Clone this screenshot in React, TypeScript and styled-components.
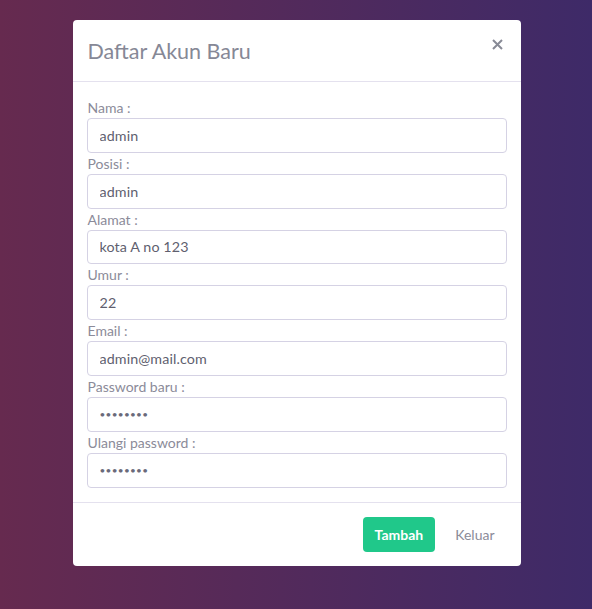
import React from "react";
import styled, { createGlobalStyle } from "styled-components";

const Global = createGlobalStyle`
  html, body { margin: 0; padding: 0; }
  body {
    font-family: Lato, "Open Sans", sans-serif;
    background: linear-gradient(90deg, #662a4f 0%, #3e2a68 100%);
    min-height: 609px;
  }
  * { box-sizing: border-box; }
`;

const Page = styled.div`
  display: flex;
  justify-content: center;
  padding-top: 20px;
  padding-left: 1px;
  height: 609px;
`;

const Modal = styled.div`
  width: 448px;
  height: 546px;
  background: #fff;
  border-radius: 4px;
  display: flex;
  flex-direction: column;
  align-self: flex-start;
`;

const Header = styled.div`
  height: 62px;
  display: flex;
  align-items: center;
  justify-content: space-between;
  padding: 0 16px 0 15px;
  border-bottom: 1px solid #e4e1ee;
`;

const Title = styled.h5`
  margin: 0;
  font-size: 21.5px;
  font-weight: 400;
  color: #868896;
  line-height: 1;
  padding-top: 2px;
`;

const Close = styled.button`
  border: 0;
  background: none;
  padding: 0;
  width: 14px;
  height: 14px;
  display: flex;
  align-items: center;
  justify-content: center;
  cursor: pointer;
  margin-top: -12px;
`;

const Body = styled.div`
  padding: 15px 14px 14px 14px;
  display: flex;
  flex-direction: column;
  border-bottom: 1px solid #e4e1ee;
`;

const Group = styled.div`
  display: flex;
  flex-direction: column;
`;

const Label = styled.label`
  font-size: 14px;
  line-height: 21px;
  color: #8b8b99;
  padding-left: 1px;
`;

const Input = styled.input<{ $secret?: boolean }>`
  height: 34.8px;
  width: 100%;
  border: 1px solid #d5d2e4;
  border-radius: 4px;
  padding: 0 12px;
  font-family: Lato, "Open Sans", sans-serif;
  font-size: ${(p) => (p.$secret ? "10px" : "14.3px")};
  letter-spacing: ${(p) => (p.$secret ? "0.3px" : "0.1px")};
  color: ${(p) => (p.$secret ? "#6a6a7a" : "#5f5f6f")};
  outline: none;
  background: #fff;
`;

const Footer = styled.div`
  flex: 1;
  display: flex;
  justify-content: flex-end;
  align-items: flex-start;
  padding: 14px 14px 0 0;
  gap: 8px;
`;

const Button = styled.button<{ $primary?: boolean }>`
  height: 35px;
  border: 0;
  border-radius: 4px;
  font-family: Lato, "Open Sans", sans-serif;
  font-size: 14px;
  padding: 0 12px;
  background: ${(p) => (p.$primary ? "#20c88a" : "transparent")};
  color: ${(p) => (p.$primary ? "#fff" : "#8b8b99")};
  font-weight: ${(p) => (p.$primary ? 700 : 400)};
  cursor: pointer;
`;

const fields: { label: string; value: string; secret?: boolean }[] = [
  { label: "Nama :", value: "admin" },
  { label: "Posisi :", value: "admin" },
  { label: "Alamat :", value: "kota A no 123" },
  { label: "Umur :", value: "22" },
  { label: "Email :", value: "admin@mail.com" },
  { label: "Password baru :", value: "12345678", secret: true },
  { label: "Ulangi password :", value: "12345678", secret: true },
];

export default function App() {
  return (
    <>
      <Global />
      <Page>
        <Modal>
          <Header>
            <Title>Daftar Akun Baru</Title>
            <Close aria-label="close">
              <svg width="11" height="11" viewBox="0 0 11 11">
                <path d="M1 1 L10 10 M10 1 L1 10" stroke="#888a96" strokeWidth="2" />
              </svg>
            </Close>
          </Header>
          <Body>
            {fields.map((f) => (
              <Group key={f.label}>
                <Label>{f.label}</Label>
                <Input
                  $secret={f.secret}
                  type={f.secret ? "password" : "text"}
                  defaultValue={f.value}
                />
              </Group>
            ))}
          </Body>
          <Footer>
            <Button $primary>Tambah</Button>
            <Button>Keluar</Button>
          </Footer>
        </Modal>
      </Page>
    </>
  );
}
